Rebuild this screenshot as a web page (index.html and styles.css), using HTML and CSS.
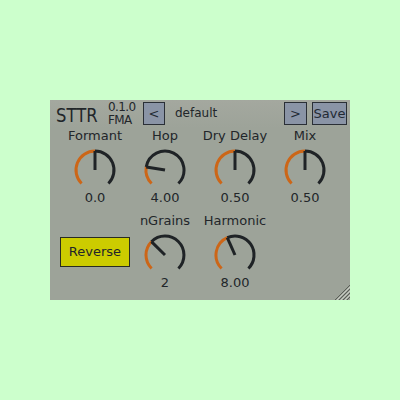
FILE: index.html
```html
<!DOCTYPE html>
<html>
<head>
<meta charset="utf-8">
<link rel="stylesheet" href="styles.css">
</head>
<body>
<div class="panel">
  <div class="header">
    <div class="title"><span>STTR</span></div>
    <div class="version">0.1.0<br>FMA</div>
    <div class="btn nav">&lt;</div>
    <div class="preset">default</div>
    <div class="spacer"></div>
    <div class="btn nav next">&gt;</div>
    <div class="btn save">Save</div>
  </div>
  <div class="grid">
    <div class="knob">
      <div class="label">Formant</div>
      <svg viewBox="0 0 44 44" width="44" height="44">
        <path class="rest" d="M22 3 A19 19 0 0 1 35.44 35.44"/>
        <path class="val" d="M8.56 35.44 A19 19 0 0 1 22 3"/>
        <line class="ptr" x1="22" y1="22" x2="22" y2="3"/>
      </svg>
      <div class="value">0.0</div>
    </div>
    <div class="knob">
      <div class="label">Hop</div>
      <svg viewBox="0 0 44 44" width="44" height="44">
        <path class="rest" d="M3.24 18.92 A19 19 0 1 1 35.44 35.44"/>
        <path class="val" d="M8.56 35.44 A19 19 0 0 1 3.24 18.92"/>
        <line class="ptr" x1="22" y1="22" x2="3.24" y2="18.92"/>
      </svg>
      <div class="value">4.00</div>
    </div>
    <div class="knob">
      <div class="label">Dry Delay</div>
      <svg viewBox="0 0 44 44" width="44" height="44">
        <path class="rest" d="M22 3 A19 19 0 0 1 35.44 35.44"/>
        <path class="val" d="M8.56 35.44 A19 19 0 0 1 22 3"/>
        <line class="ptr" x1="22" y1="22" x2="22" y2="3"/>
      </svg>
      <div class="value">0.50</div>
    </div>
    <div class="knob">
      <div class="label">Mix</div>
      <svg viewBox="0 0 44 44" width="44" height="44">
        <path class="rest" d="M22 3 A19 19 0 0 1 35.44 35.44"/>
        <path class="val" d="M8.56 35.44 A19 19 0 0 1 22 3"/>
        <line class="ptr" x1="22" y1="22" x2="22" y2="3"/>
      </svg>
      <div class="value">0.50</div>
    </div>
    <div class="toggle">Reverse</div>
    <div class="knob">
      <div class="label">nGrains</div>
      <svg viewBox="0 0 44 44" width="44" height="44">
        <path class="rest" d="M8.41 8.69 A19 19 0 1 1 35.44 35.44"/>
        <path class="val" d="M8.56 35.44 A19 19 0 0 1 8.41 8.69"/>
        <line class="ptr" x1="22" y1="22" x2="8.41" y2="8.69"/>
      </svg>
      <div class="value">2</div>
    </div>
    <div class="knob">
      <div class="label">Harmonic</div>
      <svg viewBox="0 0 44 44" width="44" height="44">
        <path class="rest" d="M14.27 4.64 A19 19 0 0 1 35.44 35.44"/>
        <path class="val" d="M8.56 35.44 A19 19 0 0 1 14.27 4.64"/>
        <line class="ptr" x1="22" y1="22" x2="14.27" y2="4.64"/>
      </svg>
      <div class="value">8.00</div>
    </div>
  </div>
  <svg class="grip" viewBox="0 0 16 16" width="16" height="16">
    <line x1="16" y1="1" x2="1" y2="16" class="g1"/>
    <line x1="16" y1="3" x2="3" y2="16" class="g2"/>
    <line x1="16" y1="5" x2="5" y2="16" class="g1"/>
    <line x1="16" y1="7" x2="7" y2="16" class="g2"/>
    <line x1="16" y1="9" x2="9" y2="16" class="g1"/>
    <line x1="16" y1="11" x2="11" y2="16" class="g2"/>
    <line x1="16" y1="13" x2="13" y2="16" class="g1"/>
  </svg>
</div>
</body>
</html>
```
FILE: styles.css
```css
html, body {
  margin: 0;
  padding: 0;
  background: #ccffcc;
}
body {
  width: 400px;
  height: 400px;
  padding-top: 100px;
  padding-left: 50px;
  box-sizing: border-box;
  font-family: "DejaVu Sans", Verdana, sans-serif;
  color: #22262a;
}
.panel {
  position: relative;
  width: 300px;
  height: 200px;
  background: #9da399;
}
.header {
  display: flex;
  height: 28px;
  padding-left: 6px;
  background: linear-gradient(#a4a89f, #9da399);
}
.title {
  width: 52px;
  font-size: 20px;
  line-height: 28px;
  padding-top: 1px;
  box-sizing: border-box;
  overflow: visible;
  white-space: nowrap;
}
.title span {
  display: inline-block;
  transform: scaleX(0.82);
  transform-origin: left center;
}
.version {
  width: 35px;
  font-size: 12px;
  line-height: 13px;
  padding-top: 1px;
  letter-spacing: -0.6px;
}
.btn {
  box-sizing: border-box;
  height: 23px;
  margin-top: 2px;
  border: 1px solid #2a2f36;
  background: #8a94a6;
  color: #222a34;
  font-size: 13px;
  line-height: 21px;
  text-align: center;
}
.nav {
  width: 22px;
}
.next {
  width: 23px;
  margin-right: 5px;
}
.save {
  width: 35px;
  margin-right: 3px;
}
.preset {
  margin-left: 10px;
  font-size: 12px;
  line-height: 27px;
}
.spacer {
  flex: 1;
}
.grid {
  display: grid;
  grid-template-columns: repeat(4, 70px);
  row-gap: 7px;
  padding-left: 10px;
}
.knob {
  display: flex;
  flex-direction: column;
  align-items: center;
}
.label, .value {
  font-size: 13px;
  line-height: 16px;
  white-space: nowrap;
}
.knob svg {
  display: block;
  margin-top: 4px;
  fill: none;
}
.value {
  margin-top: -2px;
}
.rest {
  stroke: #1f2326;
  stroke-width: 3;
}
.val {
  stroke: #cc6618;
  stroke-width: 3;
}
.ptr {
  stroke: #1f2326;
  stroke-width: 3;
}
.toggle {
  align-self: start;
  box-sizing: border-box;
  width: 70px;
  height: 30px;
  margin-top: 24px;
  border: 1px solid #2a2c20;
  background: #cccc00;
  font-size: 13px;
  line-height: 28px;
  text-align: center;
}
.grip {
  position: absolute;
  right: 0;
  bottom: 0;
}
.g1 {
  stroke: #5a5e58;
  stroke-width: 1;
}
.g2 {
  stroke: #c8ccc4;
  stroke-width: 1;
}
```
